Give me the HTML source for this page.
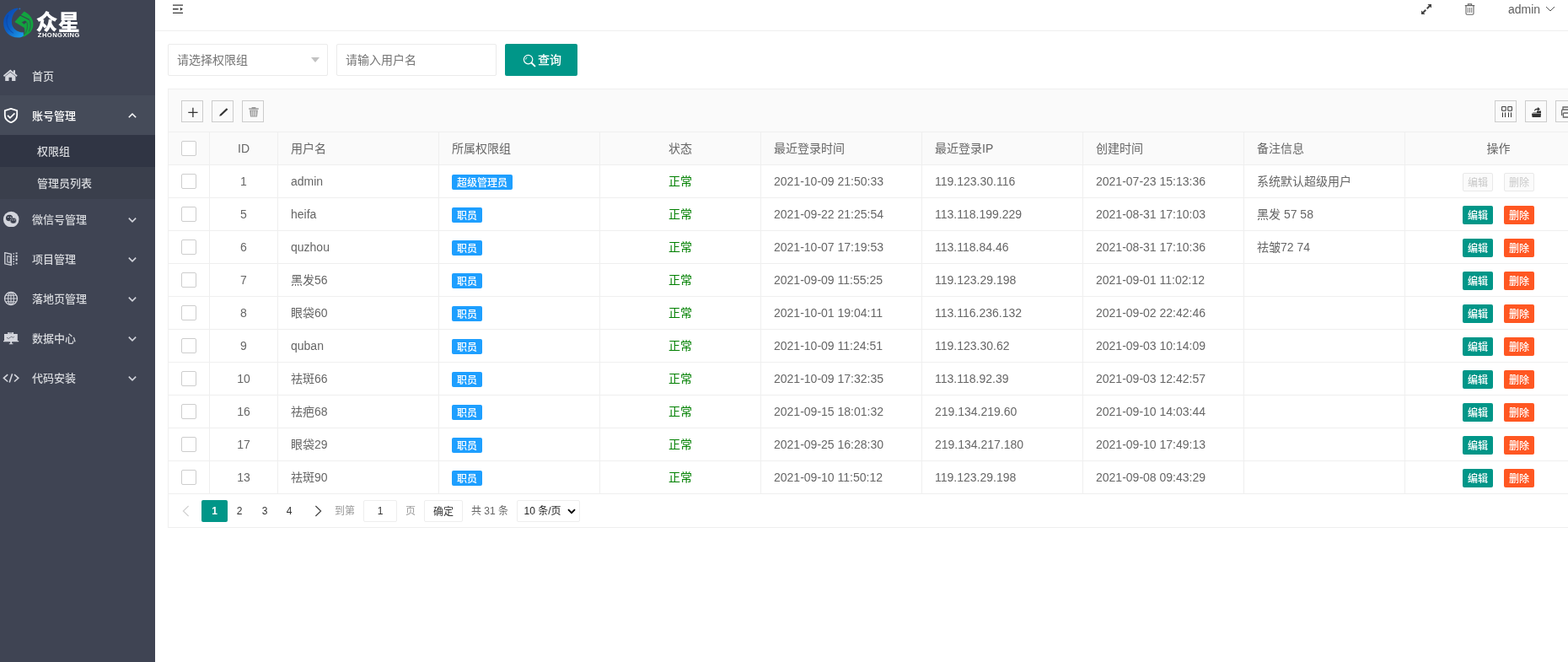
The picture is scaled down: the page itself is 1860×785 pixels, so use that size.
<!DOCTYPE html>
<html lang="zh-CN">
<head>
<meta charset="utf-8">
<title>管理员列表</title>
<style>
*{box-sizing:border-box;margin:0;padding:0}
html,body{width:1860px;height:785px;overflow:hidden;background:#fff}
body{font-family:"Liberation Sans","Noto Sans CJK SC",sans-serif;font-size:14px;color:#666;position:relative}
ul{list-style:none}
#app{position:absolute;left:0;top:0;width:1860px;height:785px;overflow:hidden;background:#fff;will-change:transform}
/* sidebar */
.side{position:absolute;left:0;top:0;width:184px;height:785px;background:#3f4453;color:#d6d8dc;font-size:13px;font-weight:500}
.logo{position:absolute;left:0;top:0;width:184px;height:66px}
.menu{position:absolute;left:0;top:66px;width:184px}
.menu .it{position:relative;height:47px;line-height:47px}
.menu .it .tx{position:absolute;left:38px;top:1px}
.menu .it .ic{position:absolute;left:3px;top:14px;width:20px;height:19px}
.menu .it .ar{position:absolute;left:151.5px;top:19px;width:10px;height:10px}
.menu .it.open{background:#454b59;color:#fff}
.menu .sub{background:#3a3f4c}
.menu .sub li{height:38px;line-height:40px;padding-left:44px}
.menu .sub li.this{background:#303544}
/* header */
.hdr{position:absolute;left:184px;top:0;width:1676px;height:37px;border-bottom:1px solid #efefef;background:#fff}
.hdr .user{position:absolute;left:1605px;top:0;line-height:22px;font-size:14px;color:#5f5f5f}
.hdr svg{position:absolute}
/* search */
.sel,.inp{position:absolute;top:52px;height:38px;width:190px;border:1px solid #ebebeb;border-radius:2px;background:#fff;line-height:36px;padding-left:10px;color:#757575;font-size:14px}
.sel{left:199px}
.inp{left:399px}
.sel:after{content:"";position:absolute;right:9px;top:15px;border:5.5px solid transparent;border-top-width:6px;border-top-color:#c2c2c2}
.qbtn{position:absolute;left:599px;top:52px;width:86px;height:38px;background:#009688;border-radius:2px;color:#fff;font-size:14px;line-height:38px;font-weight:500}
.qbtn span{position:absolute;left:39px;top:0}
.qbtn svg{position:absolute;left:21px;top:12px}
/* table */
.tbl{position:absolute;left:199px;top:105px;width:1700px;height:521px;border:1px solid #efefef;border-right:0;background:#fff}
.tool{position:absolute;left:0;top:0;width:100%;height:51px;background:#fafafa;border-bottom:1px solid #efefef}
.tb{position:absolute;top:13px;width:26px;height:26px;border:1px solid #ccc;background:transparent}
.tb svg{position:absolute;left:0;top:0}
table{position:absolute;left:0;top:51px;border-collapse:separate;border-spacing:0;table-layout:fixed;width:1689px}
th,td{height:39px;border:0 solid #efefef;border-width:0 1px 1px 0;padding:0 15px;font-size:14px;font-weight:400;color:#666;text-align:left;white-space:nowrap;overflow:hidden}
th{background:#fafafa}
.c{text-align:center}
.z{padding-bottom:2px}
.cb{display:inline-block;width:18px;height:18px;border:1px solid #cdcdcd;border-radius:2px;background:#fff;vertical-align:middle;position:relative;top:0px}
.bd{display:inline-block;height:18px;line-height:20px;overflow:hidden;font-weight:500;padding:0 6px;border-radius:2px;background:#1e9fff;color:#fff;font-size:12px;vertical-align:middle;position:relative;top:1px}
.ok{color:#008000}
.b{display:inline-block;width:36px;height:22px;line-height:25px;overflow:hidden;font-weight:500;border-radius:2px;color:#fff;font-size:12px;text-align:center;vertical-align:middle;position:relative;top:1px}
.b.e{background:#009688;margin-right:13px}
.b.d{background:#ff5722}
.b.x{background:#fbfbfb;border:1px solid #e9e9e9;color:#c9c9c9;line-height:23px;font-weight:400}
/* pager */
.pg{position:absolute;left:0;top:474px;width:100%;height:39px;font-size:12px;color:#333}
.pg>*{position:absolute}
.pg .cur{left:39px;top:13px;width:31px;height:26px;line-height:26px;background:#009688;color:#fff;border-radius:2px;text-align:center;font-weight:700}
.pg .n{top:13px;width:30px;height:26px;line-height:26px;text-align:center;color:#333}
.pg .g{top:13px;height:26px;line-height:27px;color:#999;white-space:nowrap}
.pg .ib{top:13px;height:26px;line-height:24px;border:1px solid #eee;border-radius:2px;text-align:center;color:#333;background:#fff;white-space:nowrap}
</style>
</head>
<body>
<div id="app">
<div class="side">
  <div class="logo">
    <svg width="184" height="66" viewBox="0 0 184 66">
      <defs>
        <linearGradient id="lgb" x1="0" y1="0" x2="0.8" y2="1"><stop offset="0" stop-color="#0a45ad"/><stop offset="0.55" stop-color="#0d5fc4"/><stop offset="1" stop-color="#1a96e8"/></linearGradient>
      </defs>
      <path d="M20.5 9.6 C10.5 11 4.1 18.6 4.1 27.4 C4.1 37 11.6 44.6 21.4 44.6 C24.4 44.6 26.6 43.8 28.3 42.2 C27.6 41 27.6 39.6 28.1 38.4 C20.4 38.6 13.9 33.6 13.9 26 C13.9 19.4 17 13.4 22 10.6 Z" fill="url(#lgb)"/>
      <circle cx="23.4" cy="10.4" r="0.9" fill="#2c6fc4"/>
      <path d="M9.6 18 C8 21 7.6 24.6 8.2 28.2 C9 33 12 37 16 39.4" fill="none" stroke="#0b3f9c" stroke-width="1.1" opacity="0.55"/>
      <path d="M28.7 13.4 C35.6 16.8 39.4 22.6 39.4 28.8 C39.4 36 34.6 41.8 26.6 43.9 C29.4 41 30 37 28.8 33 L17.3 26 Z" fill="#12a33f"/>
      <path d="M24 18.1 L35 23.4" stroke="#3a4150" stroke-width="1.1" fill="none"/>
      <path d="M25.8 26.6 L29.4 24.6 L31.8 26 L28.6 28.8 Z" fill="#3a4150"/>
      <path d="M31.8 26.4 C33 30.4 32.6 35.6 29.6 40.4 M35.2 24 C36.8 28 36.6 33 34.4 37.4" stroke="#3a4150" stroke-width="0.9" fill="none" opacity="0.75"/>
      <text x="42.4" y="36" font-family="'Noto Sans CJK SC',sans-serif" font-weight="900" font-size="26" fill="#fff" textLength="52.4" lengthAdjust="spacing">众星</text>
      <text x="44.8" y="44.2" font-family="'Liberation Sans',sans-serif" font-weight="700" font-size="7.6" fill="#fff" textLength="49.6" lengthAdjust="spacing">ZHONGXING</text>
    </svg>
  </div>
  <ul class="menu">
    <li class="it"><svg class="ic" viewBox="0 0 20 19"><path d="M9.3 2.4 L0.9 9.5 L2 10.9 L9.3 4.9 L16.6 10.9 L17.7 9.5 L15 7.2 V3.2 H12.8 V5.4 Z" fill="#d3d5dc"/><path d="M3.2 10.6 L9.3 5.8 L15.4 10.6 V16.1 H11.1 V11.8 H7.5 V16.1 H3.2 Z" fill="#d3d5dc"/></svg><span class="tx">首页</span></li>
    <li class="it open"><svg class="ic" viewBox="0 0 20 19"><path d="M10 1.8 L17.2 4.2 V9.6 C17.2 14 13.8 17 10 18.4 C6.2 17 2.8 14 2.8 9.6 V4.2 Z" fill="none" stroke="#fff" stroke-width="1.8" stroke-linejoin="round"/><path d="M6 9.8 L9 12.8 L14.4 7.4" fill="none" stroke="#fff" stroke-width="1.8"/></svg><span class="tx">账号管理</span><svg class="ar" viewBox="0 0 10 10"><path d="M0.8 7.2 L5 3 L9.2 7.2" fill="none" stroke="#fff" stroke-width="1.55"/></svg></li>
    <li><ul class="sub"><li class="this">权限组</li><li>管理员列表</li></ul></li>
    <li class="it"><svg class="ic" viewBox="0 0 20 19"><circle cx="10.2" cy="10.1" r="9.3" fill="#d3d5dc"/><ellipse cx="8.1" cy="8.5" rx="4.1" ry="3.8" fill="#3a3f4d"/><ellipse cx="12.8" cy="11.7" rx="3.7" ry="3.4" fill="#3a3f4d" stroke="#d3d5dc" stroke-width="0.5"/><path d="M5.9 7.5 h1.6 M8.9 7.5 h1.6 M11 10.9 h1.4 M13.4 10.9 h1.4" stroke="#d3d5dc" stroke-width="0.9"/></svg><span class="tx">微信号管理</span><svg class="ar" viewBox="0 0 10 10"><path d="M0.8 3.6 L5 7.8 L9.2 3.6" fill="none" stroke="#d3d5dc" stroke-width="1.55"/></svg></li>
    <li class="it"><svg class="ic" viewBox="0 0 20 19"><path d="M2.8 2.7 L10.3 4.3 V17.5 L2.8 15.8 Z" fill="none" stroke="#d3d5dc" stroke-width="1.3"/><path d="M5.9 6.7 L9.2 7.3 V14.4 L5.9 13.8 Z" fill="none" stroke="#d3d5dc" stroke-width="1.1"/><path d="M12.4 3.2 h1.6 v1.4 h-1.6z M12.4 6.4 h1.6 v1.6 h-1.6z M12.4 9.4 h1.6 v1.6 h-1.6z M12.4 12.4 h1.6 v1.6 h-1.6z M12.4 15.6 h1.6 v1.2 h-1.6z M15.6 2.4 h2 v1.6 h-2z M15.6 5.6 h2 v2.6 h-2z M15.6 9.6 h2 v2.6 h-2z M15.6 14.6 h2 v1.6 h-2z" fill="#d3d5dc"/></svg><span class="tx">项目管理</span><svg class="ar" viewBox="0 0 10 10"><path d="M0.8 3.6 L5 7.8 L9.2 3.6" fill="none" stroke="#d3d5dc" stroke-width="1.55"/></svg></li>
    <li class="it"><svg class="ic" viewBox="0 0 20 19"><g fill="none" stroke="#d3d5dc" stroke-width="1.3"><circle cx="10" cy="10" r="7.5"/><ellipse cx="10" cy="10" rx="3.4" ry="7.5" stroke-width="1.1"/><path d="M2.5 10 H17.5 M10 2.5 V17.5 M4 6.2 H16 M4 13.8 H16" stroke-width="1.1"/></g></svg><span class="tx">落地页管理</span><svg class="ar" viewBox="0 0 10 10"><path d="M0.8 3.6 L5 7.8 L9.2 3.6" fill="none" stroke="#d3d5dc" stroke-width="1.55"/></svg></li>
    <li class="it"><svg class="ic" viewBox="0 0 20 19"><path d="M6.2 3 H13 V4.9 H17.8 V13 H19.2 V14.2 H11.1 V16.3 H12.4 V17.3 H7.8 V16.3 H9.2 V14.2 H1 V13 H2 V4.9 H6.2 Z" fill="#d3d5dc"/><path d="M7.6 3.9 H11.6" stroke="#3f4453" stroke-width="0.7"/><path d="M5 9.3 L7.1 10.5 L9.6 8.8 L10.9 8.2 L12.5 9.5 L13.8 8" fill="none" stroke="#5a5f6c" stroke-width="0.8"/></svg><span class="tx">数据中心</span><svg class="ar" viewBox="0 0 10 10"><path d="M0.8 3.6 L5 7.8 L9.2 3.6" fill="none" stroke="#d3d5dc" stroke-width="1.55"/></svg></li>
    <li class="it"><svg class="ic" viewBox="0 0 20 19"><path d="M6.2 6.1 L1.4 10.3 L6.2 14.5 M14 6.1 L18.8 10.3 L14 14.5 M11.6 5.2 L8.2 15.6" fill="none" stroke="#d3d5dc" stroke-width="1.6"/></svg><span class="tx">代码安装</span><svg class="ar" viewBox="0 0 10 10"><path d="M0.8 3.6 L5 7.8 L9.2 3.6" fill="none" stroke="#d3d5dc" stroke-width="1.55"/></svg></li>
  </ul>
</div>
<div class="hdr">
  <svg style="left:20px;top:4px" width="14" height="14" viewBox="0 0 14 14"><path d="M1 1.5 H13 V2.8 H1 Z M1 6.1 H7.6 V7.4 H1 Z M1 10.7 H13 V12 H1 Z M9.8 4.8 L13 6.75 L9.8 8.7 Z" fill="#3a3a3a"/></svg>
  <svg style="left:1501px;top:4px" width="14" height="14" viewBox="0 0 14 14"><path d="M8.4 1 H13 V5.6 L11.4 4 L8.4 7 L7 5.6 L10 2.6 Z M5.6 13 H1 V8.4 L2.6 10 L5.6 7 L7 8.4 L4 11.4 Z" fill="#444"/></svg>
  <svg style="left:1553px;top:4px" width="13" height="14" viewBox="0 0 13 14"><path d="M4.4 2 V0.9 H8.6 V2 M0.8 2.6 H12.2 M2 3.2 V12 Q2 13.2 3.2 13.2 H9.8 Q11 13.2 11 12 V3.2" fill="none" stroke="#666" stroke-width="1.1"/><path d="M4.3 5 V11 M6.5 5 V11 M8.7 5 V11" stroke="#666" stroke-width="0.9"/></svg>
  <span class="user">admin</span>
  <svg style="left:1649px;top:7px" width="12" height="7" viewBox="0 0 12 7"><path d="M1 1 L6 6 L11 1" fill="none" stroke="#555" stroke-width="1"/></svg>
</div>
<div class="sel">请选择权限组</div>
<div class="inp">请输入用户名</div>
<div class="qbtn"><svg width="16" height="16" viewBox="0 0 16 16"><circle cx="6.6" cy="6.6" r="5.2" fill="none" stroke="#fff" stroke-width="1.2"/><path d="M10.6 10.6 L14.4 14.4" stroke="#fff" stroke-width="2" stroke-linecap="round"/><path d="M3.6 6.6 A3 3 0 0 1 5.4 3.9" fill="none" stroke="#fff" stroke-width="0.9"/></svg><span>查询</span></div>
<div class="tbl">
  <div class="tool">
    <div class="tb" style="left:15px"><svg width="24" height="24" viewBox="0 0 24 24"><path d="M7.3 13.4 H18.5 M12.9 7.8 V19" stroke="#333" stroke-width="1.3" fill="none"/></svg></div>
    <div class="tb" style="left:51px"><svg width="24" height="24" viewBox="0 0 24 24"><path d="M8.2 17.8 L8.9 15.7 L16.8 8.2 L18.4 9.8 L10.4 17.2 Z" fill="#333"/></svg></div>
    <div class="tb" style="left:87px"><svg width="24" height="24" viewBox="0 0 24 24"><path d="M10.6 7 H15.4 V8.2 H18.8 V9.8 H7.2 V8.2 H10.6 Z M8.2 10.6 H17.8 L17 18.6 H9 Z" fill="#999"/><path d="M10.6 11.4 V17.6 M12.3 11.4 V17.6 M14 11.4 V17.6 M15.6 11.4 V17.6" stroke="#fafafa" stroke-width="0.7"/></svg></div>
    <div class="tb" style="left:1573px"><svg width="24" height="24" viewBox="0 0 24 24"><path d="M7.6 6.6 H12.2 V11.2 H7.6 Z M14.8 6.6 H19.4 V11.2 H14.8 Z M8.5 13.4 V19 M11.5 13.4 V19 M15.5 13.4 V19 M18.5 13.4 V19" stroke="#333" stroke-width="1" fill="none"/></svg></div>
    <div class="tb" style="left:1609px"><svg width="24" height="24" viewBox="0 0 24 24"><path d="M6.8 14.6 H18 V11.6 H13 V13.4 H9 Z M7 15 H18 L17.6 19 H7.6 Z" fill="#333"/><path d="M10 12 C10 9.4 11.6 8.6 14 8.6 V7 L17 9.4 L14 11.6 V10.2 C12 10.2 11.2 10.6 10 12 Z" fill="#333"/></svg></div>
    <div class="tb" style="left:1645px"><svg width="24" height="24" viewBox="0 0 24 24"><path d="M8 10 V7 H20 M6.6 17 V11.4 Q6.6 10 8 10 H20 M8.4 14 H20 M8.4 14 V19 H20" stroke="#666" stroke-width="1.3" fill="none"/></svg></div>
  </div>
  <table>
    <colgroup><col style="width:49px"><col style="width:81px"><col style="width:191px"><col style="width:191px"><col style="width:191px"><col style="width:191px"><col style="width:191px"><col style="width:191px"><col style="width:191px"><col style="width:222px"></colgroup>
    <thead><tr><th><i class="cb"></i></th><th class="c">ID</th><th class="z">用户名</th><th class="z">所属权限组</th><th class="z c">状态</th><th class="z">最近登录时间</th><th class="z">最近登录IP</th><th class="z">创建时间</th><th class="z">备注信息</th><th class="z c">操作</th></tr></thead>
    <tbody>
<tr><td><i class="cb"></i></td><td class="c">1</td><td>admin</td><td><span class="bd">超级管理员</span></td><td class="z c ok">正常</td><td>2021-10-09 21:50:33</td><td>119.123.30.116</td><td>2021-07-23 15:13:36</td><td class="z">系统默认超级用户</td><td class="c"><span class="b e x">编辑</span><span class="b d x">删除</span></td></tr>
<tr><td><i class="cb"></i></td><td class="c">5</td><td>heifa</td><td><span class="bd">职员</span></td><td class="z c ok">正常</td><td>2021-09-22 21:25:54</td><td>113.118.199.229</td><td>2021-08-31 17:10:03</td><td class="z">黑发 57 58</td><td class="c"><span class="b e">编辑</span><span class="b d">删除</span></td></tr>
<tr><td><i class="cb"></i></td><td class="c">6</td><td>quzhou</td><td><span class="bd">职员</span></td><td class="z c ok">正常</td><td>2021-10-07 17:19:53</td><td>113.118.84.46</td><td>2021-08-31 17:10:36</td><td class="z">祛皱72 74</td><td class="c"><span class="b e">编辑</span><span class="b d">删除</span></td></tr>
<tr><td><i class="cb"></i></td><td class="c">7</td><td class="z">黑发56</td><td><span class="bd">职员</span></td><td class="z c ok">正常</td><td>2021-09-09 11:55:25</td><td>119.123.29.198</td><td>2021-09-01 11:02:12</td><td></td><td class="c"><span class="b e">编辑</span><span class="b d">删除</span></td></tr>
<tr><td><i class="cb"></i></td><td class="c">8</td><td class="z">眼袋60</td><td><span class="bd">职员</span></td><td class="z c ok">正常</td><td>2021-10-01 19:04:11</td><td>113.116.236.132</td><td>2021-09-02 22:42:46</td><td></td><td class="c"><span class="b e">编辑</span><span class="b d">删除</span></td></tr>
<tr><td><i class="cb"></i></td><td class="c">9</td><td>quban</td><td><span class="bd">职员</span></td><td class="z c ok">正常</td><td>2021-10-09 11:24:51</td><td>119.123.30.62</td><td>2021-09-03 10:14:09</td><td></td><td class="c"><span class="b e">编辑</span><span class="b d">删除</span></td></tr>
<tr><td><i class="cb"></i></td><td class="c">10</td><td class="z">祛斑66</td><td><span class="bd">职员</span></td><td class="z c ok">正常</td><td>2021-10-09 17:32:35</td><td>113.118.92.39</td><td>2021-09-03 12:42:57</td><td></td><td class="c"><span class="b e">编辑</span><span class="b d">删除</span></td></tr>
<tr><td><i class="cb"></i></td><td class="c">16</td><td class="z">祛疤68</td><td><span class="bd">职员</span></td><td class="z c ok">正常</td><td>2021-09-15 18:01:32</td><td>219.134.219.60</td><td>2021-09-10 14:03:44</td><td></td><td class="c"><span class="b e">编辑</span><span class="b d">删除</span></td></tr>
<tr><td><i class="cb"></i></td><td class="c">17</td><td class="z">眼袋29</td><td><span class="bd">职员</span></td><td class="z c ok">正常</td><td>2021-09-25 16:28:30</td><td>219.134.217.180</td><td>2021-09-10 17:49:13</td><td></td><td class="c"><span class="b e">编辑</span><span class="b d">删除</span></td></tr>
<tr><td><i class="cb"></i></td><td class="c">13</td><td class="z">祛斑90</td><td><span class="bd">职员</span></td><td class="z c ok">正常</td><td>2021-09-10 11:50:12</td><td>119.123.29.198</td><td>2021-09-08 09:43:29</td><td></td><td class="c"><span class="b e">编辑</span><span class="b d">删除</span></td></tr>
    </tbody>
  </table>
  <div class="pg">
    <svg style="left:16px;top:19px" width="9" height="14" viewBox="0 0 9 14"><path d="M7.6 1 L1.4 7 L7.6 13" fill="none" stroke="#d2d2d2" stroke-width="1.2"/></svg>
    <span class="cur">1</span>
    <span class="n" style="left:69px">2</span><span class="n" style="left:99px">3</span><span class="n" style="left:128px">4</span>
    <svg style="left:173px;top:19px" width="9" height="14" viewBox="0 0 9 14"><path d="M1.4 1 L7.6 7 L1.4 13" fill="none" stroke="#444" stroke-width="1.2"/></svg>
    <span class="g" style="left:197px">到第</span>
    <span class="ib" style="left:231px;width:40px">1</span>
    <span class="g" style="left:281px">页</span>
    <span class="ib" style="left:303px;width:46px;color:#333;line-height:26px">确定</span>
    <span class="g" style="left:359px;color:#666">共 31 条</span>
    <span class="ib" style="left:413px;width:75px;text-align:left;padding-left:7.5px;color:#222">10 条/页</span>
    <svg style="left:473px;top:23px" width="10" height="7" viewBox="0 0 10 7"><path d="M1 1.2 L5 5.2 L9 1.2" fill="none" stroke="#000" stroke-width="1.8"/></svg>
  </div>
</div>
</div>
</body>
</html>
